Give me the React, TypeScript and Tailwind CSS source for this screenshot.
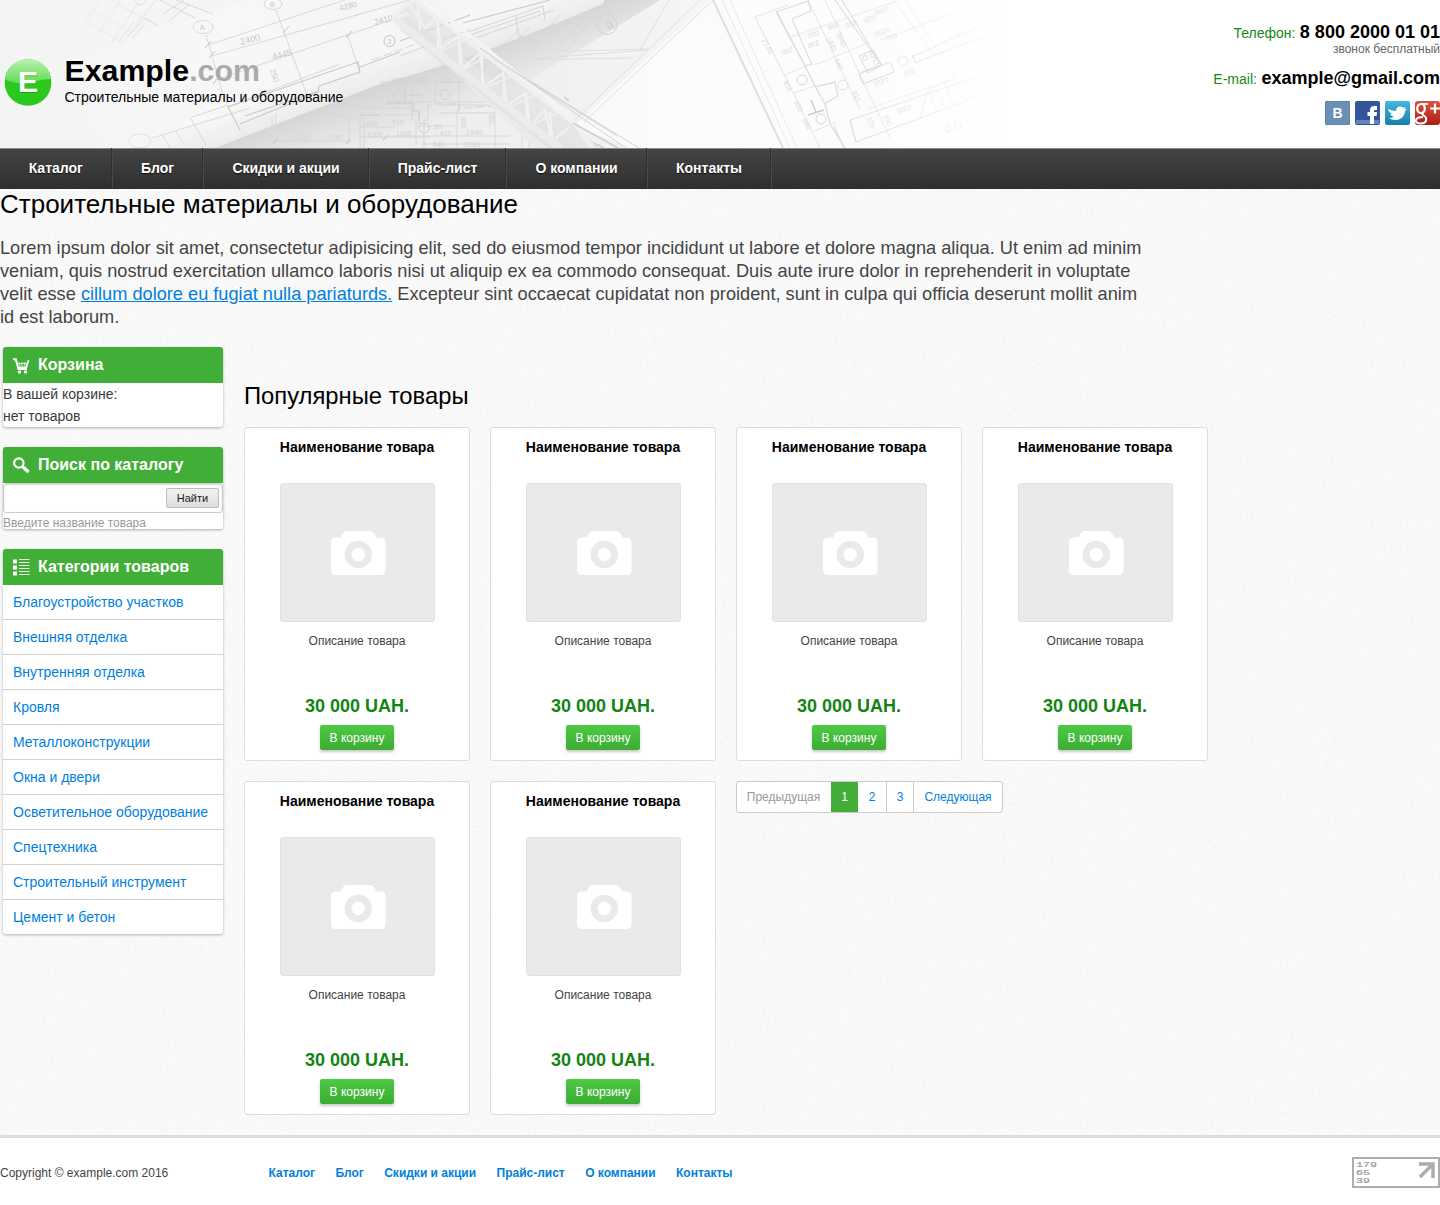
import React from "react";

const navItems = [
  { label: "Каталог", width: "w-[112.5px]" },
  { label: "Блог", width: "w-[91px]" },
  { label: "Скидки и акции", width: "w-[166px]" },
  { label: "Прайс-лист", width: "w-[137px]" },
  { label: "О компании", width: "w-[141px]" },
  { label: "Контакты", width: "w-[124px]" },
];

const categories = [
  "Благоустройство участков",
  "Внешняя отделка",
  "Внутренняя отделка",
  "Кровля",
  "Металлоконструкции",
  "Окна и двери",
  "Осветительное оборудование",
  "Спецтехника",
  "Строительный инструмент",
  "Цемент и бетон",
];

function Blueprint() {
  return (
    <svg
      className="absolute left-0 top-0"
      width="1040"
      height="148"
      viewBox="0 0 1040 148"
      fill="none"
      fontFamily="Liberation Sans, sans-serif"
      aria-hidden="true"
    >
      <defs>
        <linearGradient id="paper" x1="0" x2="1040" y1="0" y2="0" gradientUnits="userSpaceOnUse">
          <stop offset="0" stopColor="#f4f4f4" />
          <stop offset=".22" stopColor="#f5f5f5" />
          <stop offset=".4" stopColor="#ededed" />
          <stop offset=".62" stopColor="#f3f3f3" />
          <stop offset=".75" stopColor="#fafafa" />
          <stop offset="1" stopColor="#ffffff" />
        </linearGradient>
        <linearGradient id="roll" x1="390" y1="0" x2="420" y2="84" gradientUnits="userSpaceOnUse">
          <stop offset="0" stopColor="#f9f9f9" />
          <stop offset=".55" stopColor="#f8f8f8" />
          <stop offset=".85" stopColor="#ececec" />
          <stop offset="1" stopColor="#dfdfdf" />
        </linearGradient>
        <linearGradient id="shade" x1="420" y1="70" x2="440" y2="124" gradientUnits="userSpaceOnUse">
          <stop offset="0" stopColor="#cecece" />
          <stop offset="1" stopColor="#cecece" stopOpacity="0" />
        </linearGradient>
        <linearGradient id="fadeL" x1="0" x2="200" y1="0" y2="0" gradientUnits="userSpaceOnUse">
          <stop offset="0" stopColor="#f4f4f4" />
          <stop offset=".4" stopColor="#f4f4f4" stopOpacity=".7" />
          <stop offset="1" stopColor="#f4f4f4" stopOpacity="0" />
        </linearGradient>
        <linearGradient id="fadeR" x1="850" x2="1010" y1="0" y2="0" gradientUnits="userSpaceOnUse">
          <stop offset="0" stopColor="#fff" stopOpacity="0" />
          <stop offset="1" stopColor="#fff" />
        </linearGradient>
        <filter id="soft" x="0" y="0" width="1040" height="148" filterUnits="userSpaceOnUse" colorInterpolationFilters="sRGB">
          <feGaussianBlur stdDeviation=".5" />
        </filter>
      </defs>
      <rect width="1040" height="148" fill="url(#paper)" />
      <g filter="url(#soft)" opacity=".8">
        <path d="M180 148L605 0H660L420 148Z" fill="url(#shade)" />
        {/* rolled sheet */}
        <path d="M60 60L250 0H604L603 4C560 22 470 60 380 84L215 148H0V120Z" fill="url(#roll)" />
        <path d="M0 100L60 62L250 0H440L120 148H0Z" fill="#f7f7f7" opacity=".6" />
        {/* loose sheet and right-hand drawing */}
        <path d="M575 125L710 0H1040V148H630Z" fill="#fdfdfd" />
        <path d="M575 120L700 0M584 122L713 0M505 61L645 50M500 53L648 49M640 50L669 0M508 60L632 58" stroke="#dadada" />
        <path d="M713 0L783 148" stroke="#dadada" strokeWidth="2" />
        <path d="M722 0L790 148M730 0L797 148" stroke="#e6e6e6" />
        {/* upper-left floor plan */}
        <g stroke="#d0d0d0">
          <path d="M92 10L130 32M86 22L125 44M110 0L158 26M84 26L100 0M98 34L120 0M112 42L140 0M120 46L156 0" strokeOpacity=".7" />
          <path d="M128 36L146 18L158 26M132 38L146 23M160 0L195 18M176 0L213 14M163 14L184 0M170 20L190 4M118 42L134 22" />
          <circle cx="140" cy="0" r="5" />
        </g>
        {/* roll drawing */}
        <g stroke="#cecece" strokeWidth=".9">
          <ellipse cx="203" cy="27" rx="10" ry="6.500" />
          <ellipse cx="273" cy="4" rx="9" ry="5.500" />
          <ellipse cx="140" cy="141" rx="11" ry="7" />
          <path d="M206 35L225 102M276 10L308 98M208 45L345 0M212 56L410 0M215 80L400 17M347 34L360 72" />
          <path d="M152 138L250 108M192 117L228 105M227 107L340 64M190 117L206 145M162 134L170 148M175 130L184 144" />
          <path d="M205 48l6-7M209 58l6-7M283 33l6-7M346 38l6-7M213 84l6-7" stroke="#b0b0b0" />
        </g>
        <path d="M228 107L358 62L360 72L319 86L318 92L240 124M228 107L240 130M245 116L318 91M360 67L400 52M400 41L470 15M463 23L550 0" stroke="#c2c2c2" strokeWidth="1.200" />
        <path d="M400 56L470 29M468 32L543 6L545 20M470 40L554 10M516 16L518 35L538 43M470 35L540 11" stroke="#cfcfcf" />
        <path d="M372 60L430 39" stroke="#d4d4d4" strokeDasharray="9 3" />
        <g fill="#bbb" fontSize="9">
          <text transform="translate(241 45) rotate(-14)" letterSpacing=".1">2400</text>
          <text transform="translate(340 11) rotate(-14)" fontSize="8">4280</text>
          <text transform="translate(273 60) rotate(-14)">4445</text>
          <text transform="translate(375 25) rotate(-14)" fontSize="8.500">2410</text>
          <text transform="translate(270 70) rotate(72)" fontSize="8">250</text>
          <text x="200" y="30" fontSize="7">А</text>
          <text x="270" y="7" fontSize="7">В</text>
        </g>
        <circle cx="389.500" cy="41" r="5.500" stroke="#b5b5b5" />
        <text x="387.500" y="43.500" fontSize="7" fill="#bbb">3</text>
        {/* flat floor plan below the roll */}
        <g stroke="#d0d0d0">
          <path d="M272 116V141M276 114V142M240 141H348M326 108H388M326 116H349V142M360 116V148M364 116V148M327 116V108M360 127H395M360 137H430M388 80V102M386 102H520M386 108H412V120H416V145M432 105H428V120H424V148M412 80V102M435 80V102M459 80V102M380 82H470M440 105H495M440 113H495" />
          <path d="M457 109V148M495 105V148M385 115H420M390 136H510M416 126H455M422 144H510M522 125V148" strokeOpacity=".8" />
        </g>
        <path d="M405 87V102M408 95H423M387 103H413V111H419V124M459 103V111M360 115H381M273 144l5-5M346 144l5-5M383 140l5-5" stroke="#c4c4c4" strokeWidth="1.100" />
        <path d="M464 108L492 106M385 104H411M435 104H456" stroke="#cacaca" strokeDasharray="9 3" />
        <g stroke="#c9c9c9">
          <circle cx="397.500" cy="96.500" r="5" />
          <circle cx="445" cy="94.500" r="5" />
          <circle cx="424" cy="128" r="5" />
          <circle cx="534" cy="145" r="5" />
        </g>
        <g fill="#c8c8c8" fontSize="7">
          <text x="294" y="140" letterSpacing=".1">1310</text>
          <text x="331" y="140" letterSpacing=".4">740</text>
          <text x="366" y="126">840</text>
          <text x="392" y="125">910</text>
          <text x="367" y="137">1000</text>
          <text x="396" y="136">1000</text>
          <text x="434" y="129">50</text>
          <text x="440" y="136">910</text>
          <text x="466" y="135" letterSpacing=".3">1940</text>
          <text x="433" y="147">640</text>
          <text x="464" y="147" letterSpacing=".3">2260</text>
          <text x="391" y="83">800</text>
          <text x="416" y="83">800</text>
          <text x="440" y="83">810</text>
          <text transform="translate(466 128) rotate(-90)">300</text>
          <text transform="translate(494 126) rotate(-90)">700</text>
        </g>
        {/* crane boom */}
        <path d="M392 14L400 10L580 148H535Z" fill="#ebebeb" />
        <path d="M400 30L398 14L416 0L570 120L600 148H548Z" fill="#dcdcdc" opacity=".6" />
        <path d="M410 5L425 28L437 18L441 48L459 36L462 69L480 53L484 87L503 73L507 106L525 93L528 128L545 110L552 142L570 126M418 5L420 30M438 17V51M459 36L460 70M482 54V88M504 75V108M526 92L530 128M550 112L553 146" stroke="#f2f2f2" strokeWidth="2.200" />
        <path d="M441 51L470 38M462 70L490 55M485 88L514 75M507 108L533 96M529 126L557 113" stroke="#f0f0f0" strokeWidth="1.600" />
        <path d="M393 16L412 0M392 18L408 14M415 0L576 125L592 148" stroke="#f1f1f1" strokeWidth="4" />
        <path d="M426 0L572 118" stroke="#f5f5f5" strokeWidth="4" />
        <path d="M480 48L506 66L626 148M506 66L639 148M527 80L617 136" stroke="#cbcbcb" />
        <path d="M573 123L618 148M594 143L604 148M564 97l5 4" stroke="#c8c8c8" strokeWidth="1.800" />
        <path d="M393 18L560 148" stroke="#ececec" strokeWidth="7" />
        {/* lettered marker on the sheet */}
        <g stroke="#cdcdcd">
          <circle cx="607" cy="24.500" r="10" />
          <path d="M597 20L580 12M498 52L520 28M505 54L530 26M530 53L561 13M555 52L596 5M566 52L590 20" strokeOpacity=".7" />
        </g>
        <text transform="translate(612 21) rotate(160)" fontSize="11" fill="#c4c4c4">B</text>
        {/* right-hand floor plan */}
        <g stroke="#cfcfcf">
          <path d="M776 12L808 1L811 11L792 19L812 65M776 12L805 66L812 64M835 0L881 65L862 72M842 0L881 65M859 74L890 62L894 72L863 84L859 74M912 57L980 26M915 63L1005 28M912 55L916 63M859 56L868 73L882 65L873 50Z" />
          <path d="M777 12L805 66L815 86L825 104L830 124L845 148M815 87L835 82L838 96L824 104M834 126L844 148M850 120L980 76M856 142L990 92M850 120L856 142" strokeWidth="1.300" stroke="#d8d8d8" />
          <path d="M808 0L860 110M825 0L890 138M755 17L785 76M785 76L820 148M755 17L788 5M785 75L806 66M794 93L815 86M812 132L836 122" strokeWidth=".8" stroke="#d8d8d8" />
          <path d="M788 38L900 0M815 65L870 42M880 40L990 0M868 109L950 80M893 0L935 55M905 0L970 100M920 117L928 90L955 78M928 90L937 111M935 86L945 108M945 83L953 105M953 79L963 100" strokeWidth=".8" stroke="#dedede" />
          <circle cx="802" cy="80" r="5" />
          <circle cx="821" cy="119" r="5" />
          <circle cx="843" cy="85" r="5" stroke="#dadada" />
          <circle cx="903" cy="61" r="5" stroke="#dadada" />
          <path d="M808 115L824 110M811 100L816 112" stroke="#bfbfbf" strokeWidth="1.400" />
          <path d="M862 57l4-2 2 4-4 2zM870 54l4-2 2 4-4 2zM873 61l4-2 2 4-4 2zM945 127l4-2 2 6-4 2zM954 122l4-2 4 7-5 2z" stroke="#d5d5d5" />
        </g>
        <g fill="#d2d2d2" fontSize="7">
          <text transform="translate(762 40) rotate(65)" letterSpacing=".2">2140</text>
          <text transform="translate(792 47) rotate(160)">250</text>
          <text transform="translate(818 30) rotate(160)">002</text>
          <text transform="translate(838 22) rotate(160)">098</text>
          <text transform="translate(856 20) rotate(160)">010</text>
          <text transform="translate(874 15) rotate(160)">025</text>
          <text transform="translate(888 6) rotate(160)">1740</text>
          <text transform="translate(889 27) rotate(160)">0250</text>
          <text transform="translate(896 33) rotate(160)">010</text>
          <text transform="translate(888 77) rotate(160)">1210</text>
          <text transform="translate(914 68) rotate(160)">910</text>
          <text transform="translate(911 104) rotate(160)">4500</text>
          <text transform="translate(826 38) rotate(65)">1440</text>
          <text transform="translate(836 34) rotate(65)">0640</text>
          <text transform="translate(818 40) rotate(160)">290</text>
          <text transform="translate(783 82) rotate(65)">810</text>
          <text transform="translate(794 102) rotate(65)">830</text>
          <text transform="translate(802 120) rotate(65)">840</text>
          <text transform="translate(834 60) rotate(65)">640</text>
          <text transform="translate(883 116) rotate(65)">230</text>
          <text transform="translate(866 118) rotate(65)">320</text>
          <text transform="translate(852 92) rotate(65)">810</text>
        </g>
      </g>
      <rect width="200" height="148" fill="url(#fadeL)" />
      <rect x="850" width="190" height="148" fill="url(#fadeR)" />
    </svg>
  );
}

function Logo() {
  return (
    <svg width="48" height="50" viewBox="0 0 48 50" className="mt-[57px] ml-1 shrink-0">
      <defs>
        <linearGradient id="gloss" x1="0" y1="0" x2="0" y2="1">
          <stop offset="0" stopColor="#b9f2ae" />
          <stop offset="1" stopColor="#62da54" />
        </linearGradient>
      </defs>
      <circle cx="24" cy="25.500" r="23.300" fill="#2bc81d" />
      <path d="M1 22C2 10 12 2.200 24 2.200S46 10 47 22C38 22 30 25 24 26C14 27.500 6 25 1 22Z" fill="url(#gloss)" />
      <text x="14.500" y="36" fontFamily="Liberation Sans, sans-serif" fontWeight="700" fontSize="30" fill="#178a0d" opacity=".5">E</text>
      <text x="14" y="35" fontFamily="Liberation Sans, sans-serif" fontWeight="700" fontSize="30" fill="#fff">E</text>
    </svg>
  );
}

function Socials() {
  return (
    <div className="mt-[11px] flex justify-end gap-[5px]">
      <svg width="25" height="24" viewBox="0 0 25 24">
        <rect width="25" height="24" rx="1" fill="#6b8fb5" />
        <rect x=".5" y=".5" width="24" height="23" rx="1" fill="none" stroke="#5f83aa" />
        <text x="7.500" y="17" fontFamily="Liberation Sans, sans-serif" fontWeight="700" fontSize="14" fill="#fff">В</text>
      </svg>
      <svg width="25" height="24" viewBox="0 0 25 24">
        <rect width="25" height="24" rx="2" fill="#34559b" />
        <rect x="1" y="19" width="23" height="4" fill="#6481c4" />
        <path d="M15 23V15H12.500V11H15V9C15 6.300 16.500 5 19.300 5H22V9H20.500C19.500 9 19 9.400 19 10.300V11H22L21.600 15H19V23Z" fill="#fff" />
      </svg>
      <svg width="25" height="24" viewBox="0 0 25 24">
        <defs>
          <linearGradient id="tw" x1="0" y1="0" x2="0" y2="1">
            <stop offset="0" stopColor="#46b5e0" />
            <stop offset="1" stopColor="#1580ae" />
          </linearGradient>
        </defs>
        <rect width="25" height="24" rx="2" fill="url(#tw)" />
        <path d="M3 8C6 9 8 10 11 10C11 7 12.500 5.500 15 5.500C16.500 5.500 17.400 6 18 6.800L20.500 6L19.500 8L22 8L20 10C19.800 15 16 19 10.500 19C7.500 19 5.500 18.300 4 17C6 17 7.500 16.500 8.500 15.500C6.500 15 5.500 14 5.300 13L7 12.700C5 12 3.500 10.500 3 8Z" fill="#fff" />
      </svg>
      <svg width="25" height="24" viewBox="0 0 25 24">
        <defs>
          <linearGradient id="gp" x1="0" y1="0" x2="0" y2="1">
            <stop offset="0" stopColor="#df5142" />
            <stop offset="1" stopColor="#a61f16" />
          </linearGradient>
        </defs>
        <rect width="25" height="24" rx="3" fill="url(#gp)" />
        <g fill="none" stroke="#fff">
          <path d="M13 3H6" strokeWidth="1.800" />
          <ellipse cx="6" cy="7.500" rx="3.800" ry="4.500" strokeWidth="2.200" />
          <path d="M8.500 11C5 14 10 14 11 17C12 21.500 8 23 4.500 22.500C1 22 0 20 1.500 18C3 16.200 5 16 8 16" strokeWidth="2" />
          <path d="M20 2.500V12.500M15 7.500H25" strokeWidth="2.200" />
        </g>
      </svg>
    </div>
  );
}

function Noise() {
  return (
    <svg className="absolute inset-0 h-full w-full" aria-hidden="true">
      <filter id="grain">
        <feTurbulence type="fractalNoise" baseFrequency=".35" numOctaves="2" seed="4" />
        <feColorMatrix values="0 0 0 0 0.5  0 0 0 0 0.5  0 0 0 0 0.5  .15 0 0 0 -.055" />
      </filter>
      <rect width="100%" height="100%" filter="url(#grain)" />
    </svg>
  );
}

function PanelTitle({ icon, children }: { icon: React.ReactNode; children: React.ReactNode }) {
  return (
    <h3 className="flex h-9 items-center bg-[#41af37] pl-[10px] text-[16px] font-bold text-white">
      <span className="mr-2 w-[17px] shrink-0 pt-px">{icon}</span>
      {children}
    </h3>
  );
}

const panel = "overflow-hidden rounded-[3px] bg-white shadow-[0_1px_3px_rgba(0,0,0,0.3)]";

function Sidebar() {
  return (
    <aside className="ml-[3px] flex w-[220px] shrink-0 flex-col">
      <section className={panel}>
        <PanelTitle
          icon={
            <svg width="17" height="16" viewBox="0 0 17 16" fill="none">
              <path d="M0 1.200H2.800L5.500 11H14" stroke="#fff" strokeWidth="2" />
              <path d="M6 4L7 8M9 4V8M12 4L11.500 8M5 5.500H14" stroke="#fff" opacity=".75" />
              <path d="M4 9.500H13.200L15.500 2.200" stroke="#fff" strokeWidth="1.800" />
              <rect x="5" y="12.500" width="3" height="3" rx="1" fill="#fff" />
              <rect x="11" y="12.500" width="3" height="3" rx="1" fill="#fff" />
            </svg>
          }
        >
          Корзина
        </PanelTitle>
        <p className="h-[44px] text-[14px] leading-[22px] text-[#3a3a3a]">
          В вашей корзине:
          <br />
          нет товаров
        </p>
      </section>
      <section className={panel + " mt-5"}>
        <PanelTitle
          icon={
            <svg width="17" height="17" viewBox="0 0 17 17" fill="none" stroke="#fff">
              <circle cx="5.800" cy="6" r="4.700" strokeWidth="2.200" />
              <path d="M9.500 9.500L15.500 15" strokeWidth="3.200" />
            </svg>
          }
        >
          Поиск по каталогу
        </PanelTitle>
        <div className="flex h-[30px] items-center justify-end rounded-[3px] border border-[#ccc] pr-[3px] shadow-[inset_0_1px_2px_rgba(0,0,0,0.15)]">
          <button className="h-5 w-[53px] rounded-[2px] border border-[#bbb] bg-linear-to-b from-[#f1f1f1] to-[#dedede] text-[11px] leading-[18px] text-[#222]">
            Найти
          </button>
        </div>
        <p className="h-4 text-[12px] leading-5 text-[#999]">Введите название товара</p>
      </section>
      <section className={panel + " mt-5"}>
        <PanelTitle
          icon={
            <svg width="17" height="17" viewBox="0 0 17 17" fill="#fff">
              <path d="M0 .5h4v4H0zM0 6.500h4v4H0zM0 12.500h4v4H0z" />
              <path d="M6 0h10.500v1H6zM6 3h10.500v1H6zM6 6h10.500v1H6zM6 9h10.500v1H6zM6 12h10.500v1H6zM6 15h10.500v1H6z" opacity=".9" />
            </svg>
          }
        >
          Категории товаров
        </PanelTitle>
        <ul>
          {categories.map((c) => (
            <li key={c} className="h-[35px] border-b border-[#d2d2d2] pl-[10px] text-[14px] leading-[34px] text-[#0080dd] last:h-[34px] last:border-0">
              {c}
            </li>
          ))}
        </ul>
      </section>
    </aside>
  );
}

function ProductCard() {
  return (
    <article className="flex h-[334px] w-[226px] flex-col items-center rounded-[3px] border border-[#ddd] bg-white">
      <h4 className="mt-[9px] text-[14px] font-bold leading-5 text-black">Наименование товара</h4>
      <div className="mt-[26px] flex h-[139px] w-[155px] items-center justify-center rounded-[3px] border border-[#e1e1e1] bg-[#eaeaea] pl-[2px]">
        <svg width="55" height="45" viewBox="0 0 55 45">
          <path d="M5 7.500H10C11 3.500 13 1 17 1H38C42 1 44 3.500 45 7.500H50Q54.500 7.500 54.500 12V40Q54.500 45 50 45H5Q0 45 0 40V12Q0 7.500 5 7.500Z" fill="#fff" />
          <circle cx="27.300" cy="24.500" r="10.200" fill="none" stroke="#eaeaea" strokeWidth="7" />
        </svg>
      </div>
      <p className="mt-[9px] text-[12px] leading-5 text-[#444]">Описание товара</p>
      <strong className="mt-[43px] text-[18px] leading-6 text-[#138413]">30 000 UAH.</strong>
      <button className="mt-[7px] h-[25px] w-[74px] rounded-[2px] bg-linear-to-b from-[#4dca44] to-[#3dac34] text-[12px] text-white shadow-[0_2px_3px_rgba(0,0,0,0.22)]">
        В корзину
      </button>
    </article>
  );
}

function Pagination() {
  return (
    <nav className="flex h-8 w-[267px] overflow-hidden rounded-[3px] border border-[#ccc] bg-white text-center text-[12px] leading-[30px] text-[#0080dd]">
      <span className="w-[94px] pr-px text-[#999]">Предыдущая</span>
      <span className="w-[27px] bg-[#41af37] text-white">1</span>
      <span className="w-[29px] border-r border-[#ccc]">2</span>
      <span className="w-[27px] border-r border-[#ccc]">3</span>
      <span className="w-[88px]">Следующая</span>
    </nav>
  );
}

export default function App() {
  return (
    <div className="flex h-[1205px] w-[1440px] flex-col overflow-hidden bg-white font-['Liberation_Sans',Arial,sans-serif]">
      <header className="relative h-[148px] shrink-0">
        <Blueprint />
        <div className="relative flex justify-between">
          <div className="flex">
            <Logo />
            <div className="ml-[12.5px] mt-[53px]">
              <div className="text-[30.3px] font-bold leading-9 text-black">
                Example<span className="text-[#aaa]">.com</span>
              </div>
              <p className="text-[14px] leading-4 text-black">Строительные материалы и оборудование</p>
            </div>
          </div>
          <div className="pt-[21px] text-right">
            <div className="leading-[22px]">
              <span className="text-[14px] text-[#138a13]">Телефон:</span>{" "}
              <strong className="text-[18px] text-black">8 800 2000 01 01</strong>
            </div>
            <p className="-mt-[2px] text-[12px] leading-[14px] text-[#666]">звонок бесплатный</p>
            <div className="mt-[11px] leading-[22px]">
              <span className="text-[14px] text-[#138a13]">E-mail:</span>{" "}
              <strong className="text-[18px] text-black">example@gmail.com</strong>
            </div>
            <Socials />
          </div>
        </div>
      </header>
      <nav className="flex h-[41px] shrink-0 border-y border-t-[#8a8a8a] border-b-[#2b2b2b] bg-linear-to-b from-[#444] to-[#303030]">
        {navItems.map((item) => (
          <a key={item.label} className={item.width + " relative border-r border-[#4a4a4a] text-center text-[14px] font-bold leading-[38px] text-white [text-shadow:0_1px_1px_#111]"}>
            {item.label}
            <i className="absolute -top-px bottom-0 right-0 w-px bg-[#303030]" />
          </a>
        ))}
      </nav>
      <main className="relative h-[946px] shrink-0 bg-[#fafafa]">
        <Noise />
        <div className="relative">
          <h1 className="text-[26px] leading-[30px] text-black">Строительные материалы и оборудование</h1>
          <p className="mt-[18px] w-[1160px] text-[18.19px] leading-[23px] text-[#444]">
            Lorem ipsum dolor sit amet, consectetur adipisicing elit, sed do eiusmod tempor incididunt ut labore et dolore magna aliqua. Ut enim ad minim
            <br />
            veniam, quis nostrud exercitation ullamco laboris nisi ut aliquip ex ea commodo consequat. Duis aute irure dolor in reprehenderit in voluptate
            <br />
            velit esse <a className="text-[#0080dd] underline">cillum dolore eu fugiat nulla pariaturds.</a> Excepteur sint occaecat cupidatat non proident, sunt in culpa qui officia deserunt mollit anim
            <br />
            id est laborum.
          </p>
          <div className="mt-[18px] flex items-start">
            <Sidebar />
            <section className="ml-[21px] w-[964px] pt-8">
              <h2 className="h-[48px] text-[23.8px] leading-[34px] text-black">Популярные товары</h2>
              <div className="grid grid-cols-[repeat(4,226px)] gap-5">
                {[0, 1, 2, 3, 4, 5].map((i) => (
                  <ProductCard key={i} />
                ))}
                <Pagination />
              </div>
            </section>
          </div>
        </div>
      </main>
      <footer className="flex h-[70px] shrink-0 items-start border-t-[3px] border-[#dcdcdc] bg-white text-[12px]">
        <p className="mt-[25px] w-[268.5px] leading-5 text-[#444]">Copyright © example.com 2016</p>
        <nav className="mt-[25px] flex gap-[20.4px] font-bold leading-5 text-[#0080dd]">
          {navItems.map((item) => (
            <a key={item.label}>{item.label}</a>
          ))}
        </nav>
        <svg className="ml-auto mt-[19px]" width="88" height="31" viewBox="0 0 88 31">
          <rect x="1" y="1" width="86" height="29" fill="#fff" stroke="#adadad" strokeWidth="2" />
          <g fontFamily="Liberation Mono, monospace" fontSize="7.500" fill="#999" stroke="#999" strokeWidth=".2">
            <text x="4" y="10" textLength="21" lengthAdjust="spacingAndGlyphs">179</text>
            <text x="4" y="18" textLength="14" lengthAdjust="spacingAndGlyphs">65</text>
            <text x="4" y="26" textLength="14" lengthAdjust="spacingAndGlyphs">39</text>
          </g>
          <path d="M67 7H81V21M80 8L68 20" fill="none" stroke="#adadad" strokeWidth="3.500" />
        </svg>
      </footer>
    </div>
  );
}
